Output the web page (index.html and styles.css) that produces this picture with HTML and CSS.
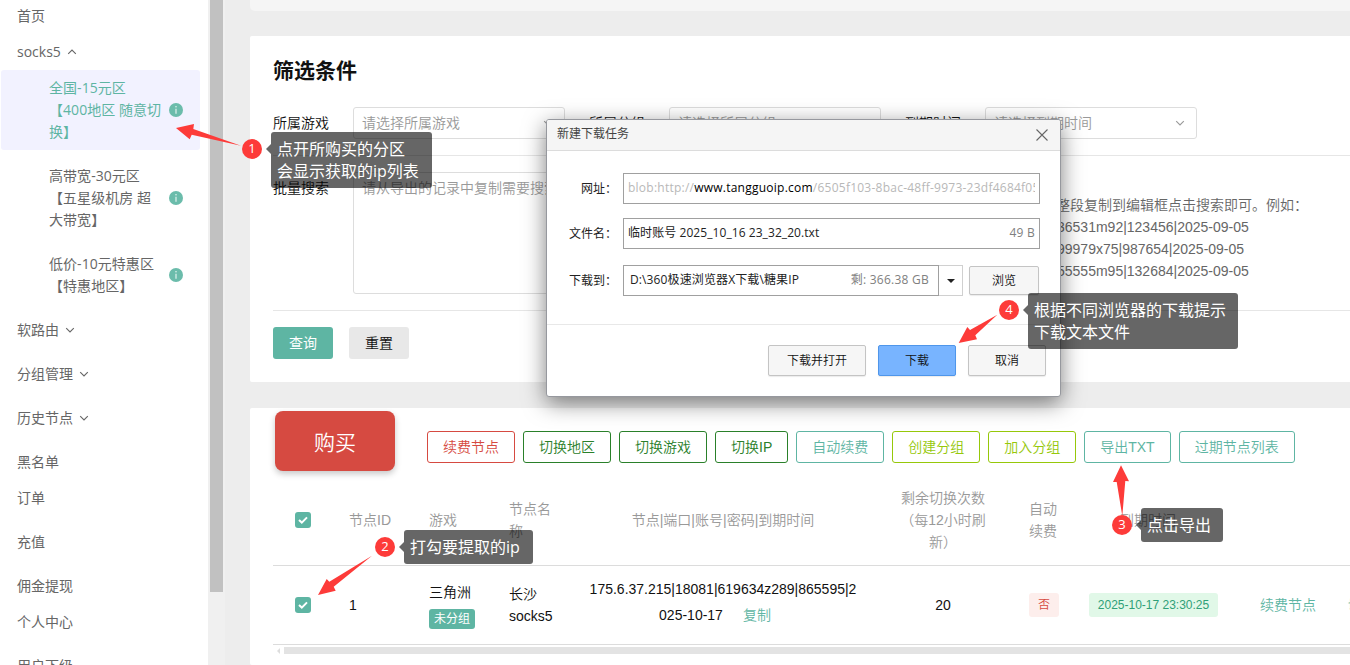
FILE: index.html
```html
<!DOCTYPE html>
<html lang="zh-CN">
<head>
<meta charset="utf-8">
<title>节点管理</title>
<link rel="stylesheet" href="styles.css">
</head>
<body>
<svg class="defs" width="0" height="0">
  <symbol id="down" viewBox="0 0 10 10"><path d="M1.2 3.2L5 7l3.8-3.8" fill="none" stroke="currentColor" stroke-width="1.1"/></symbol>
  <symbol id="up" viewBox="0 0 10 10"><path d="M1.2 6.8L5 3l3.8 3.8" fill="none" stroke="currentColor" stroke-width="1.1"/></symbol>
  <symbol id="info" viewBox="0 0 14 14"><circle cx="7" cy="7" r="7" fill="#6bbcab"/><path d="M7 5.8v5" stroke="#fff" stroke-opacity=".8" stroke-width="1.2"/><circle cx="7" cy="3.8" r=".8" fill="#fff" fill-opacity=".8"/></symbol>
  <symbol id="check" viewBox="0 0 16 16"><path d="M4 8l2.8 2.6L12 5.4" fill="none" stroke="#fff" stroke-width="2"/></symbol>
</svg>
<div class="app">
  <nav class="sidebar">
    <div class="item">首页</div>
    <div class="item">socks5<svg class="caret"><use href="#up"/></svg></div>
    <div class="sub active"><span>全国-15元区<br>【400地区 随意切<br>换】</span><svg class="info"><use href="#info"/></svg></div>
    <div class="sub"><span>高带宽-30元区<br>【五星级机房 超<br>大带宽】</span><svg class="info"><use href="#info"/></svg></div>
    <div class="sub"><span>低价-10元特惠区<br>【特惠地区】</span><svg class="info"><use href="#info"/></svg></div>
    <div class="item">软路由<svg class="caret"><use href="#down"/></svg></div>
    <div class="item spaced">分组管理<svg class="caret"><use href="#down"/></svg></div>
    <div class="item spaced">历史节点<svg class="caret"><use href="#down"/></svg></div>
    <div class="item spaced">黑名单</div>
    <div class="item">订单</div>
    <div class="item spaced">充值</div>
    <div class="item spaced">佣金提现</div>
    <div class="item">个人中心</div>
    <div class="item spaced">用户下级</div>
  </nav>
  <div class="scroll"><div class="thumb"></div></div>
  <main class="main">
    <div class="card strip"></div>
    <section class="card filter">
      <h2>筛选条件</h2>
      <div class="fields">
        <label>所属游戏</label><div class="select">请选择所属游戏<svg><use href="#down"/></svg></div>
        <label>所属分组</label><div class="select">请选择所属分组<svg><use href="#down"/></svg></div>
        <label>到期时间</label><div class="select">请选择到期时间<svg><use href="#down"/></svg></div>
      </div>
      <div class="batch">
        <label>批量搜索</label>
        <div class="textarea">请从导出的记录中复制需要搜索的内容</div>
        <div class="help"><span>整段复制到编辑框点击搜索即可。例如：</span><br>36531m92|123456|2025-09-05<br>99979x75|987654|2025-09-05<br>55555m95|132684|2025-09-05</div>
      </div>
      <div class="actions"><div class="btn primary">查询</div><div class="btn">重置</div></div>
    </section>
    <section class="card list">
      <div class="tools">
        <div class="buy">购买</div>
        <div class="tool red">续费节点</div>
        <div class="tool green">切换地区</div>
        <div class="tool green">切换游戏</div>
        <div class="tool green">切换IP</div>
        <div class="tool teal">自动续费</div>
        <div class="tool lime">创建分组</div>
        <div class="tool lime">加入分组</div>
        <div class="tool teal">导出TXT</div>
        <div class="tool teal">过期节点列表</div>
      </div>
      <div class="row head">
        <div class="pick"><svg class="box"><use href="#check"/></svg></div>
        <div>节点ID</div>
        <div>游戏</div>
        <div>节点名称</div>
        <div class="mid">节点|端口|账号|密码|到期时间</div>
        <div class="mid">剩余切换次数<br>（每12小时刷<br>新）</div>
        <div>自动续费</div>
        <div class="mid">到期时间</div>
        <div></div>
      </div>
      <div class="row data">
        <div class="pick"><svg class="box"><use href="#check"/></svg></div>
        <div>1</div>
        <div class="game">三角洲<span class="tag">未分组</span></div>
        <div>长沙<br>socks5</div>
        <div class="mid node">175.6.37.215|18081|619634z289|865595|2<br>025-10-17<span class="link copy">复制</span></div>
        <div class="mid">20</div>
        <div><span class="no">否</span></div>
        <div><span class="date">2025-10-17 23:30:25</span></div>
        <div class="ops"><span class="link">续费节点</span><span class="link">切换</span></div>
      </div>
      <div class="hscroll"><i class="left"></i><i class="bar"></i></div>
    </section>
  </main>
</div>

<div class="dialog">
  <div class="title">新建下载任务<svg width="12" height="12" viewBox="0 0 12 12"><path d="M.5.5l11 11M11.5.5l-11 11" stroke="#666" stroke-width="1.1"/></svg></div>
  <div class="body">
    <div class="line"><label>网址：</label><div class="input url"><span>blob:http://<b>www.tangguoip.com</b>/6505f103-8bac-48ff-9973-23df4684f05a</span></div></div>
    <div class="line"><label>文件名：</label><div class="input file">临时账号 2025_10_16 23_32_20.txt<em>49 B</em></div></div>
    <div class="line last"><label>下载到：</label><div class="input path">D:\360极速浏览器X下载\糖果IP<em>剩: 366.38 GB</em></div><div class="drop"><i></i></div><div class="dbtn browse">浏览</div></div>
  </div>
  <div class="foot"><div class="dbtn open">下载并打开</div><div class="dbtn ok">下载</div><div class="dbtn">取消</div></div>
</div>

<svg class="arrows" width="1350" height="665" fill="#fd3b39">
  <path d="M176 128L194 124 193.3 129 241 145.7 191.7 134.7 189.7 139.3z"/>
  <path d="M318 595L326.7 579 329.3 581.7 372 555.7 333.7 586.7 335.7 590.7z"/>
  <path d="M1121 465.3L1129 481.3 1125.3 481 1122.3 516 1116.7 482 1113 482z"/>
  <path d="M958.7 343L967.3 327 970 330 997.3 314.7 975.3 335.3 977 339.3z"/>
</svg>
<div class="note n1"><i>1</i><p>点开所购买的分区<br>会显示获取的ip列表</p></div>
<div class="note n2"><i>2</i><p>打勾要提取的ip</p></div>
<div class="note n3"><i>3</i><p>点击导出</p></div>
<div class="note n4"><i>4</i><p>根据不同浏览器的下载提示<br>下载文本文件</p></div>
</body>
</html>
```
FILE: styles.css
```css
* { box-sizing: border-box; }
body {
  margin: 0;
  width: 1350px;
  height: 665px;
  overflow: hidden;
  position: relative;
  font: 350 14px/22px "Liberation Sans", "Noto Sans CJK SC", sans-serif;
  color: #111;
  white-space: nowrap;
}
.defs { display: block; }
.app { display: flex; height: 665px; background: #ededed; }

.sidebar {
  width: 208px;
  flex: none;
  height: 665px;
  overflow: hidden;
  background: #fff;
  color: #666;
  font-family: "Open Sans", "Noto Sans CJK SC", sans-serif;
  font-weight: 400;
}
.item { height: 36px; padding-left: 17px; display: flex; align-items: center; gap: 6px; }
.item:first-child { margin-top: -2px; }
.spaced { margin-top: 8px; }
.caret { width: 10px; height: 10px; color: #666; }
.sub {
  margin: 0 8px 8px 1px;
  padding: 7px 17px 7px 48px;
  display: flex;
  align-items: center;
  justify-content: space-between;
  border-radius: 3px;
  letter-spacing: .05px;
}
.active { background: #f2f2ff; color: #5eb5a3; }
.info { width: 14px; height: 14px; flex: none; }

.scroll { width: 17px; flex: none; background: #f0f0f0; padding: 0 2px; }
.thumb { height: 592px; background: #c1c1c1; }

.main { flex: 1; min-width: 0; padding-left: 25px; overflow: hidden; }
.card { background: #fff; border-radius: 2px 0 0 2px; }
.strip { height: 11px; background: #f5f5f5; border-radius: 0 0 0 5px; margin-bottom: 25px; }
.filter { height: 346px; padding: 20px 0 0 23px; margin-bottom: 26px; }
h2 { margin: 0 0 21px; font-size: 21px; line-height: 30px; font-weight: 700; }
.fields { display: flex; align-items: center; height: 32px; }
.fields label { width: 80px; }
.select {
  width: 212px;
  height: 32px;
  margin-right: 24px;
  padding: 0 11px 0 8px;
  display: flex;
  align-items: center;
  justify-content: space-between;
  border: 1px solid #ddd;
  border-radius: 3px;
  color: #999;
}
.select svg { width: 10px; height: 10px; }
.batch {
  display: flex;
  margin-top: 16px;
  padding: 16px 0;
  height: 156px;
  border-top: 1px solid #e6e6e6;
  border-bottom: 1px solid #e6e6e6;
}
.batch label { width: 80px; padding-top: 5px; }
.textarea { width: 520px; height: 122px; padding: 4px 8px; border: 1px solid #ddd; border-radius: 3px; color: #999; }
.help { margin-left: 184px; padding-top: 22px; color: #666; }
.help span { margin-left: -1px; }
.actions { display: flex; gap: 16px; padding-top: 16px; }
.btn { width: 60px; height: 32px; line-height: 32px; text-align: center; border-radius: 3px; background: #e8e8e8; }
.primary { background: #5eb5a3; color: #fff; font-weight: 400; }

.list { height: 257px; padding-left: 23px; overflow: hidden; }
.tools { display: flex; align-items: center; gap: 8px; padding: 3px 0 0 2px; height: 67px; }
.buy {
  width: 120px;
  height: 60px;
  margin: 0 24px 4px 0;
  line-height: 64px;
  text-align: center;
  font-size: 21px;
  color: #fff;
  background: #d64a41;
  border-radius: 8px;
  box-shadow: 0 3px 6px rgba(0, 0, 0, .22);
}
.tool { height: 32px; line-height: 30px; padding: 0 15px; margin-top: 8px; border: 1px solid; border-radius: 3px; }
.red { color: #d64a41; }
.green { color: #2a802a; }
.teal { color: #5eb5a3; }
.lime { color: #96c80a; }

.row {
  display: grid;
  grid-template-columns: 60px 80px 80px 80px 300px 140px 60px 150px 200px;
  align-items: center;
  border-bottom: 1px solid #dcdcdc;
}
.row > div { padding: 0 16px; white-space: normal; }
.row > .mid { text-align: center; white-space: nowrap; }
.head { height: 91px; color: #999; }
.data { height: 79px; }
.row > .pick { padding-left: 22px; }
.box { display: block; width: 16px; height: 16px; border-radius: 3px; background: #5eb5a3; }
.row > .game { display: flex; flex-direction: column; align-items: flex-start; gap: 7px; line-height: 20px; }
.tag { height: 20px; line-height: 20px; padding: 0 5px; font-size: 12px; font-weight: 400; color: #fff; background: #5eb5a3; border-radius: 3px; white-space: nowrap; }
.row > .node { line-height: 26px; padding-bottom: 6px; }
.link { color: #5eb5a3; }
.copy { margin: 0 16px 0 20px; }
.no { display: block; width: 30px; height: 24px; line-height: 24px; text-align: center; font-size: 12px; color: #d64a41; background: #fdeeec; border-radius: 3px; }
.date { display: block; width: 129px; height: 24px; line-height: 24px; text-align: center; font-size: 12px; color: #2fa078; background: #e1f8e8; border-radius: 3px; white-space: nowrap; }
.row > .ops { display: flex; gap: 32px; padding-left: 37px; white-space: nowrap; }
.hscroll { display: flex; align-items: center; gap: 4px; padding: 2px 0 0 3px; height: 9px; }
.left { border: 3px solid transparent; border-right-color: #ddd; border-left: 0; margin-left: 1px; }
.bar { flex: 1; height: 7px; background: #e3e3e3; }

.dialog {
  position: absolute;
  left: 546px;
  top: 119px;
  width: 515px;
  height: 278px;
  background: #fff;
  border: 1px solid #96989e;
  border-radius: 3px;
  box-shadow: 0 6px 22px rgba(0, 0, 0, .5);
  font: 400 12px/18px "Open Sans", "Noto Sans CJK SC", sans-serif;
  color: #222;
}
.title { height: 31px; padding: 0 12px 2px 10px; display: flex; align-items: center; justify-content: space-between; background: #f5f5f5; border-bottom: 1px solid #dcdcdc; border-radius: 2px 2px 0 0; color: #444; }
.title svg { margin-top: 2px; }
.body { height: 174px; padding: 22px 20px 0 0; border-bottom: 1px solid #e8e8e8; }
.line { display: flex; align-items: center; height: 31px; margin-bottom: 14px; }
.line.last { margin-top: 16px; }
.line label { width: 70px; margin-right: 6px; text-align: right; }
.input { flex: 1; height: 31px; padding: 0 4px 2px; display: flex; align-items: center; justify-content: space-between; border: 1px solid #a0a0a0; }
.url { color: #b8b8b8; letter-spacing: .24px; }
.url span { width: 407px; overflow: hidden; }
.url b { color: #000; font-weight: 400; }
.file { letter-spacing: .07px; }
.input em { font-style: normal; color: #808080; letter-spacing: .25px; }
.path { flex: none; width: 316px; padding: 0 9px 2px 6px; letter-spacing: .12px; }
.drop { width: 24px; height: 31px; border: 1px solid #d0d0d0; border-left: 0; display: flex; align-items: center; justify-content: center; }
.drop i { border: 4px solid transparent; border-top: 4px solid #222; border-bottom: 0; }
.dbtn { width: 78px; height: 31px; line-height: 29px; text-align: center; background: #f6f6f6; border: 1px solid #c4c4c4; border-radius: 2px; box-shadow: 0 1px 1px rgba(0, 0, 0, .08); font-weight: 350; color: #111; }
.browse { width: 70px; height: 29px; line-height: 27px; margin-left: 6px; }
.open { width: 98px; }
.ok { background: #78b4ff; border-color: #4f96ea; }
.foot { display: flex; justify-content: flex-end; gap: 12px; padding: 20px 14px 0 0; }

.arrows { position: absolute; left: 0; top: 0; }
.note { position: absolute; display: flex; align-items: flex-start; font: 400 16px/22px "Open Sans", "Noto Sans CJK SC", sans-serif; color: #fff; }
.note i { width: 20px; height: 20px; margin: 7px 9px 0 0; line-height: 19px; text-align: center; font-size: 13px; font-style: normal; border-radius: 50%; background: #fd3b39; }
.note p { position: relative; margin: 0; padding: 6px; border-radius: 3px; background: rgba(0, 0, 0, .6); font-weight: 400; }
.note p::before { content: ""; position: absolute; left: -5px; top: 12px; border: 5px solid transparent; border-right-color: rgba(0, 0, 0, .6); border-left: 0; }
.n1 { left: 242px; top: 132px; }
.n1 p { width: 161px; }
.n2 { left: 375px; top: 530px; }
.n2 p { width: 129px; }
.n3 { left: 1112px; top: 508px; }
.n3 p { width: 82px; }
.n4 { left: 999px; top: 293px; }
.n4 p { width: 210px; }
.n1 p, .n4 p { height: 56px; }
```
